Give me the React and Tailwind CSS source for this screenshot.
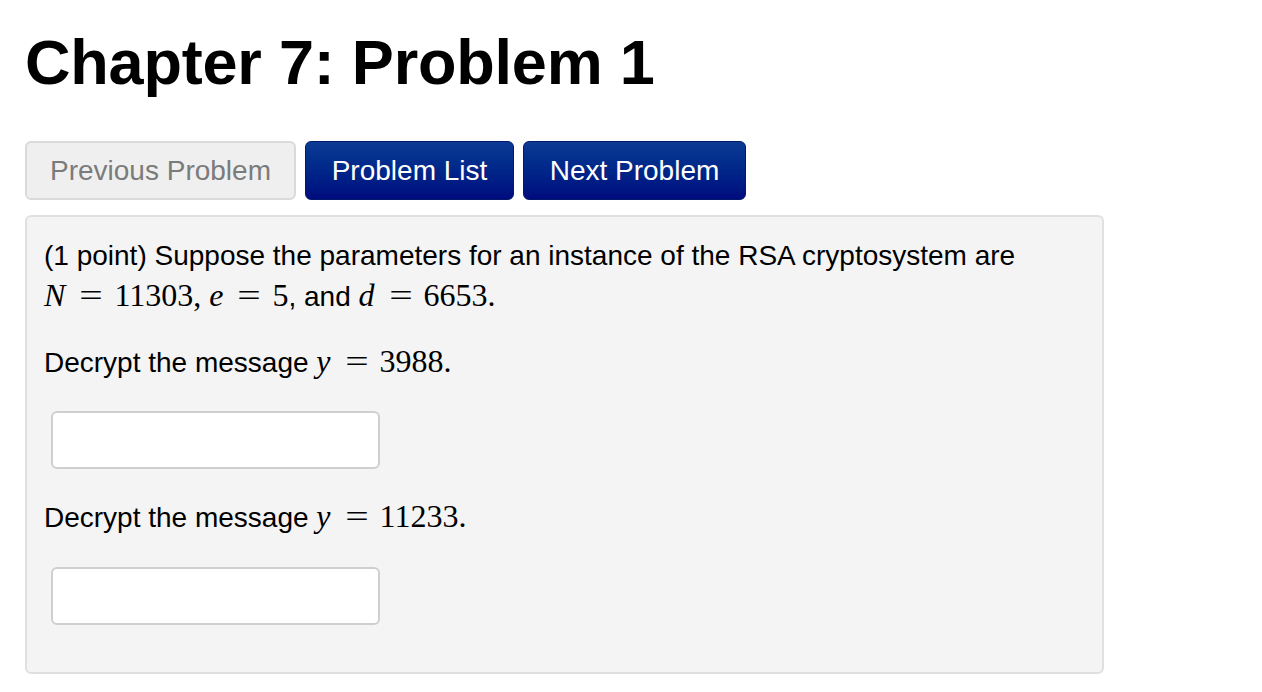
export default function App() {
  const sans = { fontFamily: '"Liberation Sans", Arial, sans-serif' };
  const Math = ({ children }) => (
    <span className="text-[32px] leading-[0]" style={{ fontFamily: '"Liberation Serif", "Times New Roman", serif' }}>
      {children}
    </span>
  );
  const V = ({ children }) => <i className="font-normal pr-[3px]">{children}</i>;
  const Eq = () => <span className="mx-[14px] inline-block scale-x-[1.3]">=</span>;

  return (
    <div className="min-h-screen bg-white text-black pl-[25px] pt-[26px]" style={sans}>
      <h1 className="text-[63px] font-bold leading-[72px] tracking-[-0.2px]">Chapter 7: Problem 1</h1>

      {/* Navigation buttons */}
      <div className="mt-[43px] flex gap-[9px] text-[28px]">
        <button className="h-[59px] w-[271px] rounded-[6px] border-2 border-[#dadada] bg-[#efefef] text-[#7b7b7b]">
          Previous Problem
        </button>
        <button className="h-[59px] w-[209px] rounded-[6px] border border-[#001b6a] bg-gradient-to-b from-[#0c3a94] to-[#000a7e] text-white">
          Problem List
        </button>
        <button className="h-[59px] w-[223px] rounded-[6px] border border-[#001b6a] bg-gradient-to-b from-[#0c3a94] to-[#000a7e] text-white">
          Next Problem
        </button>
      </div>

      {/* Problem body */}
      <div className="mt-[15px] w-[1079px] h-[459px] rounded-[6px] border-2 border-[#e0e0e0] bg-[#f4f4f4] px-[17px] pt-[18px] text-[28px] leading-[41px]">
        <p>
          (1 point) Suppose the parameters for an instance of the RSA cryptosystem are
          <br />
          <Math>
            <V>N</V>
            <Eq />
            11303, <V>e</V>
            <Eq />
            5
          </Math>
          , and{' '}
          <Math>
            <V>d</V>
            <Eq />
            6653.
          </Math>
        </p>

        <p className="mt-[25px]">
          Decrypt the message{' '}
          <Math>
            <V>y</V>
            <Eq />
            3988.
          </Math>
        </p>
        <input
          type="text"
          className="mt-[28px] ml-[7px] block h-[58px] w-[329px] rounded-[6px] border-2 border-[#cfcfcf] bg-white"
        />

        <p className="mt-[28px]">
          Decrypt the message{' '}
          <Math>
            <V>y</V>
            <Eq />
            11233.
          </Math>
        </p>
        <input
          type="text"
          className="mt-[29px] ml-[7px] block h-[58px] w-[329px] rounded-[6px] border-2 border-[#cfcfcf] bg-white"
        />
      </div>
    </div>
  );
}
